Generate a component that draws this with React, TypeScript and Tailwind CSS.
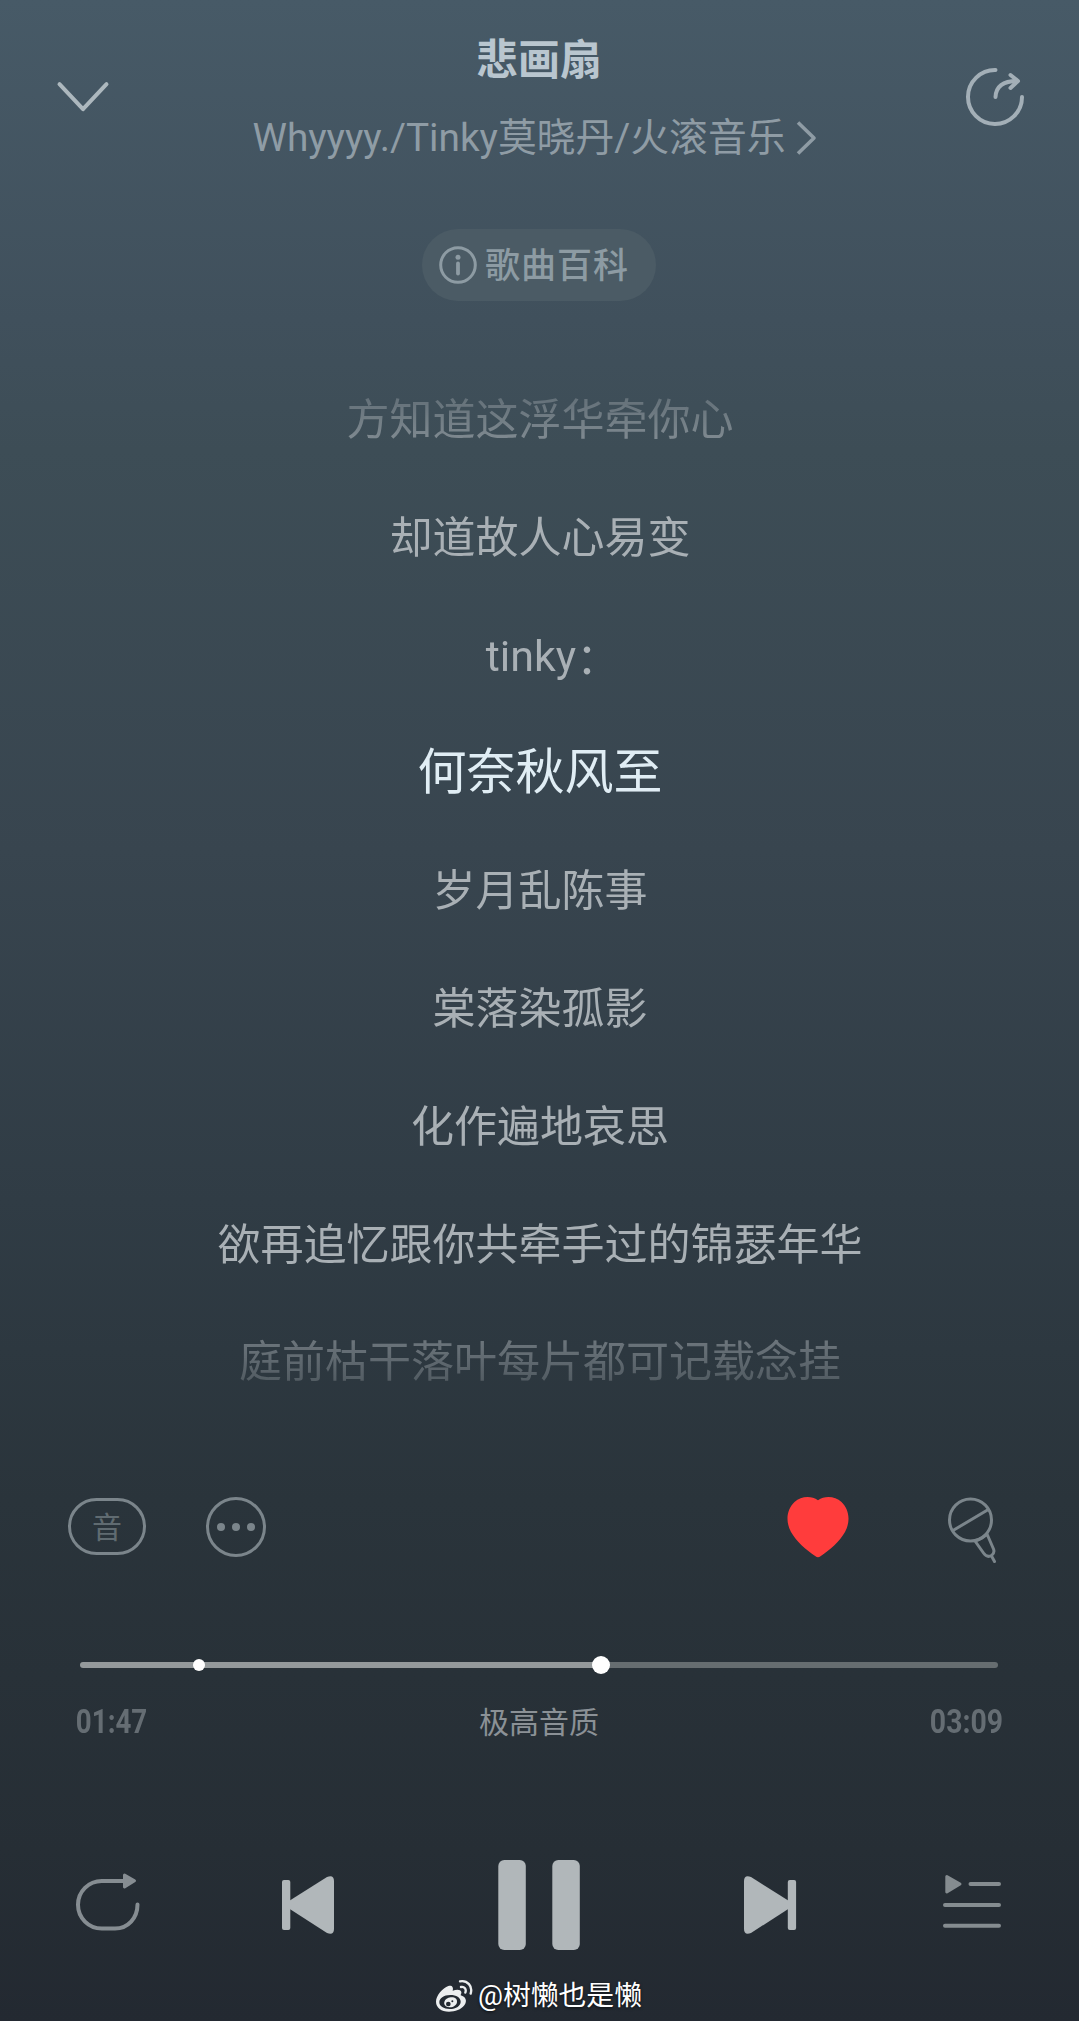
import React from "react";

const lyrics = [
  "方知道这浮华牵你心",
  "却道故人心易变",
  "tinky：",
  "何奈秋风至",
  "岁月乱陈事",
  "棠落染孤影",
  "化作遍地哀思",
  "欲再追忆跟你共牵手过的锦瑟年华",
  "庭前枯干落叶每片都可记载念挂",
];
const currentLine = 3;

function Header() {
  return (
    <header className="flex h-[229px] items-start justify-between pl-[56px] pr-[53px]">
      <svg className="mt-[80px] h-[33px] w-[54px]" viewBox="56 80 54 33" fill="none" stroke="#adb8be" strokeWidth="4" strokeLinecap="round" strokeLinejoin="round">
        <path d="M59.5 84.2 83 109.2 106.500 84.200" />
      </svg>
      <div className="flex flex-col items-center pt-[31px]">
        <h1 className="pl-[4px] text-[42px] font-bold leading-[60px] text-[#b9c6cf]">悲画扇</h1>
        <div className="mr-[5px] mt-[18px] flex items-center text-[#8f9ca5]">
          <span className="whitespace-nowrap text-[38.800px] leading-[58px]">Whyyyy./Tinky莫晓丹/火滚音乐</span>
          <svg className="ml-[10px] h-[36px] w-[21px]" viewBox="0 0 21 36" fill="none" stroke="currentColor" strokeWidth="3.600" strokeLinejoin="round">
            <path d="M2 2.500 18 18 2 33.500" />
          </svg>
        </div>
      </div>
      <svg className="mt-[66px] h-[62px] w-[62px]" viewBox="964 66 62 62" fill="none" stroke="#a3afb7" strokeWidth="4" strokeLinecap="round" strokeLinejoin="round">
        <path d="M995.500 70A27 27 0 1 0 1022 97" />
        <path d="M995.500 97C996 87 1003 81 1017 81M1010.500 75 1018 81 1010.500 88" />
      </svg>
    </header>
  );
}

function WikiPill() {
  return (
    <div className="ml-[422px] flex h-[72px] w-[234px] items-center rounded-full bg-[#4b5b65] pl-[16px] text-[#8d9ba3]">
      <svg className="h-[40px] w-[40px]" viewBox="0 0 40 40" fill="none" stroke="currentColor">
        <circle cx="20" cy="20" r="17.300" strokeWidth="3" />
        <path d="M20 18.500V28.500" strokeWidth="3.800" strokeLinecap="round" />
        <circle cx="20" cy="12.300" r="2.500" fill="currentColor" stroke="none" />
      </svg>
      <span className="ml-[7px] pt-[3px] text-[35px] font-medium leading-[50px] tracking-[1px]">歌曲百科</span>
    </div>
  );
}

function LyricText({ text }: { text: string }) {
  if (!text.endsWith("：")) return <>{text}</>;
  return (
    <span className="inline-flex">
      <span>{text.slice(0, -1)}</span>
      <span className="w-[18px] pt-[3px]">：</span>
    </span>
  );
}

function Lyrics() {
  return (
    <ul className="mt-[60px] flex h-[1060px] flex-col pl-[1px] pt-[2px] text-center text-[#a9b0b5] [mask-image:linear-gradient(to_bottom,transparent_0,rgb(0_0_0/.25)_20px,rgb(0_0_0/.62)_80px,black_110px,black_950px,rgb(0_0_0/.5)_980px,rgb(0_0_0/.28)_1026px,transparent_1060px)]">
      {lyrics.map((line, i) => (
        <li
          key={line}
          className={
            i === currentLine
              ? "h-[117.800px] shrink-0 whitespace-nowrap text-[49px] leading-[113px] text-[#e0edf4]"
              : "h-[117.800px] shrink-0 whitespace-nowrap text-[43px] leading-[115px]"
          }
        >
          <LyricText text={line} />
        </li>
      ))}
    </ul>
  );
}

function Actions() {
  return (
    <div className="mt-[69px] flex h-[76px] items-start px-[68px] text-[#7b858b]">
      <div className="mt-[8px] flex h-[57px] w-[78px] items-center justify-center rounded-full border-[3px] border-[#7b858b] pt-[3px] text-[30px] leading-none text-[#606b71]">
        音
      </div>
      <svg className="ml-[59px] mt-[6px] h-[62px] w-[62px]" viewBox="0 0 62 62" fill="currentColor">
        <circle cx="31" cy="31" r="28.500" fill="none" stroke="currentColor" strokeWidth="3" />
        <circle cx="16" cy="31" r="4" />
        <circle cx="31" cy="31" r="4" />
        <circle cx="46" cy="31" r="4" />
      </svg>
      <svg className="ml-auto mt-[6px] h-[62px] w-[64px]" viewBox="0 0 64 62">
        <path fill="#ff3c3c" d="M32 4.200C39 -.5 49 .2 55.500 6C63 13 65 25 59 36C54 45 44 54 34.500 60.300Q32 62 29.500 60.300C20 54 10 45 5 36C-1 25 1 13 8.500 6C15 .2 25-.5 32 4.200Z" />
      </svg>
      <svg className="ml-[96px] mr-[13px] mt-[6px] h-[68px] w-[52px]" viewBox="946 1496 52 68" fill="none" stroke="currentColor" strokeWidth="3" strokeLinecap="round" strokeLinejoin="round">
        <circle cx="970.500" cy="1520" r="21" />
        <path d="M953 1530.500 987.500 1510M975 1541 983.500 1553Q987 1558 991.500 1555.500Q995 1553 993.500 1549L987 1534Q983 1538.500 975 1541M991.500 1556 994.500 1561.500" />
      </svg>
    </div>
  );
}

function Progress() {
  return (
    <div className="mt-[90px] pl-[80px] pr-[81px]">
      <div className="relative flex h-[18px] items-center">
        <div className="h-[6px] w-[521px] rounded-l-full bg-[#94999b]" />
        <div className="h-[6px] flex-1 rounded-r-full bg-[#666d70]" />
        <div className="absolute left-[113px] top-[3px] h-[12px] w-[12px] rounded-full bg-white" />
        <div className="absolute left-[512px] top-0 h-[18px] w-[18px] rounded-full bg-white" />
      </div>
      <div className="-mx-[5px] mt-[28px] flex h-[40px] items-center justify-between text-[#656d73]">
        <span className="w-[120px] origin-left scale-x-[0.84] pl-px text-[33px] font-bold leading-[40px]">01:47</span>
        <span className="pt-[2px] text-[30px] leading-[40px] text-[#8b9196]">极高音质</span>
        <span className="w-[120px] origin-right scale-x-[0.86] text-right text-[33px] font-bold leading-[40px]">03:09</span>
      </div>
    </div>
  );
}

function Controls() {
  return (
    <div className="mt-[116px] flex h-[94px] items-center pl-[74px] text-[#b1b7ba]">
      <svg className="h-[94px] w-[68px]" viewBox="74 1858 68 94" fill="none" stroke="#868d92" strokeWidth="4" strokeLinecap="round" strokeLinejoin="round">
        <path d="M124 1881H101.750A23.750 23.750 0 0 0 101.750 1928.500H115C128 1928.500 137.500 1918 137.500 1904.500" />
        <path d="M124.500 1875 134.500 1880.800 124.500 1887Z" fill="#868d92" strokeWidth="3" />
      </svg>
      <svg className="ml-[138px] h-[94px] w-[56px]" viewBox="280 1858 56 94" fill="currentColor">
        <rect x="282" y="1880" width="8.300" height="50" rx="2" />
        <path d="M289 1901 327 1877Q334 1874.500 334 1881V1929Q334 1935.500 327 1933L289 1908.500Z" />
      </svg>
      <svg className="ml-[160px] h-[94px] w-[86px]" viewBox="496 1858 86 94" fill="currentColor">
        <rect x="498.300" y="1860" width="27.500" height="90" rx="6" />
        <rect x="552.300" y="1860" width="27.500" height="90" rx="6" />
      </svg>
      <svg className="ml-[160px] h-[94px] w-[56px]" viewBox="742 1858 56 94" fill="currentColor">
        <rect x="787.800" y="1880" width="8.300" height="50" rx="2" />
        <path d="M789 1901 751 1877Q744 1874.500 744 1881V1929Q744 1935.500 751 1933L789 1908.500Z" />
      </svg>
      <svg className="ml-[143px] h-[94px] w-[62px]" viewBox="941 1858 62 94" fill="none" stroke="#858c90" strokeWidth="4" strokeLinecap="round" strokeLinejoin="round">
        <path d="M970.500 1884H999M945 1905H999M945 1925.800H999" />
        <path d="M946.800 1876.500 960 1884 946.800 1892Z" fill="#858c90" strokeWidth="3" />
      </svg>
    </div>
  );
}

function WeiboLogo() {
  return (
    <svg className="mr-[5px] h-[34px] w-[38px]" viewBox="15 22 114 102" fill="none">
      <path
        fill="#eceeef"
        fillRule="evenodd"
        d="M18 90C18 72 38 49 55 43C66 40 71 47 68 57C79 53 92 52 94 61C95 65 92 68 92 71C107 75 113 88 103 101C93 114 76 120 57 120C34 120 18 108 18 90ZM61 70C41 70 28 80 28 92C28 104 41 112 59 112C79 112 92 102 92 90C92 78 79 70 61 70Z"
      />
      <path
        fill="#eceeef"
        fillRule="evenodd"
        d="M62 77C75 76 82 82 81 91C80 101 69 108 58 107C47 106 41 99 43 91C45 83 53 78 62 77ZM55 90A7 7 0 1 0 55 104A7 7 0 1 0 55 90ZM67 86A3 3 0 1 0 67 92A3 3 0 1 0 67 86Z"
      />
      <path d="M90 29C112 25 129 43 122 66M93 46C103 44 110 52 106 63" stroke="#eceeef" strokeWidth="7" strokeLinecap="round" />
    </svg>
  );
}

export default function App() {
  return (
    <main className="h-[2021px] w-[1079px] overflow-hidden bg-[linear-gradient(to_bottom,#475a67_0,#40505c_320px,#3d4d56_450px,#38454f_850px,#303c45_1200px,#2a343b_1500px,#262e35_1850px,#232931_2021px)] font-[Roboto,'Noto_Sans_CJK_SC',sans-serif]">
      <Header />
      <WikiPill />
      <Lyrics />
      <Actions />
      <Progress />
      <Controls />
      <footer className="mt-[23px] flex h-[42px] items-center justify-center pr-[2px] text-[27.800px] leading-[42px] text-white [text-shadow:0_1px_3px_rgb(0_0_0/.7)]">
        <WeiboLogo />
        @树懒也是懒
      </footer>
    </main>
  );
}
